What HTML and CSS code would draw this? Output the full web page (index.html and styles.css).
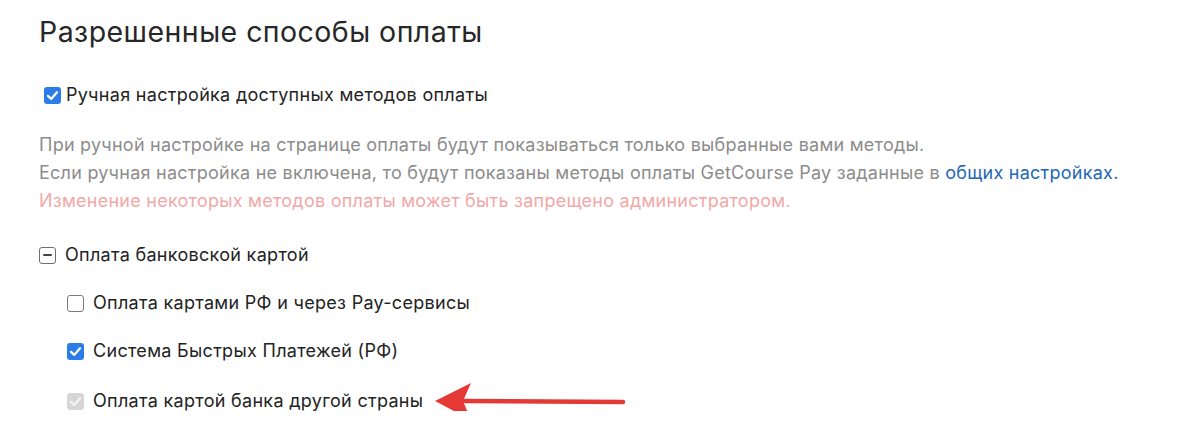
FILE: index.html
```html
<!DOCTYPE html>
<html lang="ru">
<head>
<meta charset="utf-8">
<link rel="stylesheet" href="styles.css">
</head>
<body>
<div class="page">
  <h1 class="title">Разрешенные способы оплаты</h1>
  <label class="row row-main">
    <span class="box box-checked"><svg viewBox="0 0 18 18" width="18" height="18"><path d="M4.2 9.4 L7.6 12.6 L13.8 5.6" fill="none" stroke="#fff" stroke-width="2.4" stroke-linecap="round" stroke-linejoin="round"/></svg></span>
    <span class="label label-tight">Ручная настройка доступных методов оплаты</span>
  </label>
  <div class="note">
    <div class="note-line">При ручной настройке на странице оплаты будут показываться только выбранные вами методы.</div>
    <div class="note-line">Если ручная настройка не включена, то будут показаны методы оплаты GetCourse Pay заданные в <a class="link" href="#">общих настройках.</a></div>
    <div class="note-line warn">Изменение некоторых методов оплаты может быть запрещено администратором.</div>
  </div>
  <div class="group">
    <label class="row row-group">
      <span class="box box-mixed"><span class="dash"></span></span>
      <span class="label">Оплата банковской картой</span>
    </label>
    <div class="sub">
      <label class="row row-sub">
        <span class="box box-empty"></span>
        <span class="label">Оплата картами РФ и через Pay-сервисы</span>
      </label>
      <label class="row row-sub">
        <span class="box box-checked"><svg viewBox="0 0 18 18" width="18" height="18"><path d="M4.2 9.4 L7.6 12.6 L13.8 5.6" fill="none" stroke="#fff" stroke-width="2.4" stroke-linecap="round" stroke-linejoin="round"/></svg></span>
        <span class="label">Система Быстрых Платежей (РФ)</span>
      </label>
      <label class="row row-sub row-last">
        <span class="box box-disabled"><svg viewBox="0 0 18 18" width="18" height="18"><path d="M4.2 9.4 L7.6 12.6 L13.8 5.6" fill="none" stroke="#f4f4f4" stroke-width="2.4" stroke-linecap="round" stroke-linejoin="round"/></svg></span>
        <span class="label">Оплата картой банка другой страны</span>
        <svg class="arrow" width="200" height="40" viewBox="0 0 200 40"><path d="M30 19 L188 20" stroke="#e53935" stroke-width="4.5" stroke-linecap="round"/><path d="M0 19 L36 1 L28 19 L36 38 Z" fill="#e53935"/></svg>
      </label>
    </div>
  </div>
</div>
</body>
</html>
```
FILE: styles.css
```css
html, body {
  margin: 0;
  padding: 0;
  background: #ffffff;
}
body {
  font-family: Inter, "Noto Sans", "DejaVu Sans", sans-serif;
  color: #232323;
}
.page {
  padding: 12px 0 0 39px;
}
.title {
  margin: 0;
  font-size: 28.5px;
  font-weight: 400;
  line-height: 40px;
  letter-spacing: 0.45px;
  color: #272727;
}
.row {
  display: flex;
  align-items: center;
  position: relative;
}
.row-main {
  margin-top: 33px;
  padding-left: 5px;
  height: 20px;
}
.box {
  width: 17px;
  height: 17px;
  box-sizing: border-box;
  border-radius: 3px;
  flex: none;
  display: flex;
  align-items: center;
  justify-content: center;
}
.box svg {
  width: 17px;
  height: 17px;
}
.box-checked {
  background: #2a7de8;
}
.box-empty {
  border: 1.5px solid #7a7a7a;
  background: #fff;
}
.box-mixed {
  border: 1.5px solid #6e6e6e;
  background: #fff;
}
.dash {
  width: 9px;
  height: 2.5px;
  background: #444;
  border-radius: 1px;
}
.box-disabled {
  background: #d6d6d6;
}
.label {
  font-size: 18px;
  line-height: 24px;
  margin-left: 9px;
  letter-spacing: 0.3px;
}
.label-tight {
  margin-left: 5px;
}
.note {
  margin-top: 26px;
  font-size: 18px;
  line-height: 28px;
  color: #8c8c8c;
  letter-spacing: 0.25px;
}
.link {
  color: #2369b8;
  text-decoration: none;
}
.warn {
  color: #f2a8a8;
}
.group {
  margin-top: 30px;
}
.row-group {
  height: 20px;
}
.sub {
  padding-left: 28px;
  display: flex;
  flex-direction: column;
  gap: 28px;
  margin-top: 28px;
}
.row-sub {
  height: 20px;
}
.row-last {
  margin-top: 2px;
}
.arrow {
  position: absolute;
  left: 368px;
  top: -9px;
}
```
